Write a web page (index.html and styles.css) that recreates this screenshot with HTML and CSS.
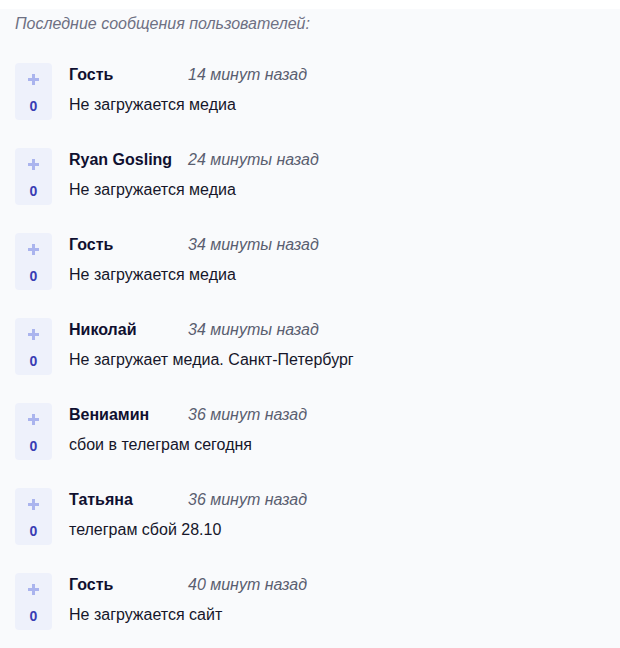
FILE: index.html
```html
<!DOCTYPE html>
<html lang="ru">
<head>
    <meta charset="UTF-8">
    <meta name="viewport" content="width=device-width, initial-scale=1.0">
    <title>Последние сообщения</title>
    <link rel="stylesheet" href="styles.css">
</head>
<body>

    <div class="messages">
        <h2 class="messages-title">Последние сообщения пользователей:</h2>

        <div class="message">
            <div class="vote">
                <svg class="vote-plus" width="11" height="11" viewBox="0 0 11 11"><path d="M5.5 0v11M0 5.5h11" stroke="currentColor" stroke-width="3"/></svg>
                <span class="vote-count">0</span>
            </div>
            <div class="message-body">
                <div class="message-head">
                    <span class="message-name">Гость</span>
                    <span class="message-time">14 минут назад</span>
                </div>
                <div class="message-text">Не загружается медиа</div>
            </div>
        </div>

        <div class="message">
            <div class="vote">
                <svg class="vote-plus" width="11" height="11" viewBox="0 0 11 11"><path d="M5.5 0v11M0 5.5h11" stroke="currentColor" stroke-width="3"/></svg>
                <span class="vote-count">0</span>
            </div>
            <div class="message-body">
                <div class="message-head">
                    <span class="message-name">Ryan Gosling</span>
                    <span class="message-time">24 минуты назад</span>
                </div>
                <div class="message-text">Не загружается медиа</div>
            </div>
        </div>

        <div class="message">
            <div class="vote">
                <svg class="vote-plus" width="11" height="11" viewBox="0 0 11 11"><path d="M5.5 0v11M0 5.5h11" stroke="currentColor" stroke-width="3"/></svg>
                <span class="vote-count">0</span>
            </div>
            <div class="message-body">
                <div class="message-head">
                    <span class="message-name">Гость</span>
                    <span class="message-time">34 минуты назад</span>
                </div>
                <div class="message-text">Не загружается медиа</div>
            </div>
        </div>

        <div class="message">
            <div class="vote">
                <svg class="vote-plus" width="11" height="11" viewBox="0 0 11 11"><path d="M5.5 0v11M0 5.5h11" stroke="currentColor" stroke-width="3"/></svg>
                <span class="vote-count">0</span>
            </div>
            <div class="message-body">
                <div class="message-head">
                    <span class="message-name">Николай</span>
                    <span class="message-time">34 минуты назад</span>
                </div>
                <div class="message-text">Не загружает медиа. Санкт-Петербург</div>
            </div>
        </div>

        <div class="message">
            <div class="vote">
                <svg class="vote-plus" width="11" height="11" viewBox="0 0 11 11"><path d="M5.5 0v11M0 5.5h11" stroke="currentColor" stroke-width="3"/></svg>
                <span class="vote-count">0</span>
            </div>
            <div class="message-body">
                <div class="message-head">
                    <span class="message-name">Вениамин</span>
                    <span class="message-time">36 минут назад</span>
                </div>
                <div class="message-text">сбои в телеграм сегодня</div>
            </div>
        </div>

        <div class="message">
            <div class="vote">
                <svg class="vote-plus" width="11" height="11" viewBox="0 0 11 11"><path d="M5.5 0v11M0 5.5h11" stroke="currentColor" stroke-width="3"/></svg>
                <span class="vote-count">0</span>
            </div>
            <div class="message-body">
                <div class="message-head">
                    <span class="message-name">Татьяна</span>
                    <span class="message-time">36 минут назад</span>
                </div>
                <div class="message-text">телеграм сбой 28.10</div>
            </div>
        </div>

        <div class="message">
            <div class="vote">
                <svg class="vote-plus" width="11" height="11" viewBox="0 0 11 11"><path d="M5.5 0v11M0 5.5h11" stroke="currentColor" stroke-width="3"/></svg>
                <span class="vote-count">0</span>
            </div>
            <div class="message-body">
                <div class="message-head">
                    <span class="message-name">Гость</span>
                    <span class="message-time">40 минут назад</span>
                </div>
                <div class="message-text">Не загружается сайт</div>
            </div>
        </div>
    </div>

</body>
</html>
```

FILE: styles.css
```css
body {
    margin: 0;
    background-color: #ffffff;
    font-family: "Liberation Sans", Arial, sans-serif;
    color: #16162a;
}

.messages {
    margin-top: 9px;
    padding: 5px 15px 20px;
    min-height: 620px;
    background-color: #f9fafc;
}

.messages-title {
    margin: 0 0 30px;
    font-size: 16px;
    line-height: 19px;
    font-weight: normal;
    font-style: italic;
    color: #6e7083;
}

.message {
    display: flex;
    gap: 17px;
    margin-bottom: 28px;
}

.vote {
    box-sizing: border-box;
    width: 37px;
    height: 57px;
    padding-top: 11px;
    display: flex;
    flex-direction: column;
    align-items: center;
    background-color: #eef1fb;
    border-radius: 4px;
    flex-shrink: 0;
}

.vote-plus {
    display: block;
    color: #aab4ee;
}

.vote-count {
    margin-top: 14px;
    font-size: 14px;
    line-height: 14px;
    font-weight: bold;
    color: #3a3db4;
}

.message-body {
    padding-top: 2px;
}

.message-head {
    display: flex;
    font-size: 16px;
    line-height: 19px;
}

.message-name {
    min-width: 104px;
    margin-right: 15px;
    font-weight: bold;
    color: #101030;
}

.message-time {
    font-style: italic;
    color: #5a5e70;
}

.message-text {
    margin-top: 11px;
    font-size: 16px;
    line-height: 19px;
    color: #16162a;
}
```
